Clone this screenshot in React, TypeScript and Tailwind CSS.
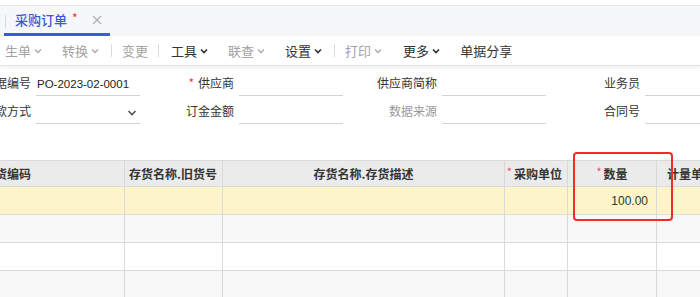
import React from "react"

const font = { fontFamily: '"Noto Sans CJK SC", "Noto Sans", sans-serif' }

function Chevron({ dark }: { dark?: boolean }) {
  return (
    <svg width="8" height="8" viewBox="0 0 8 8" className="ml-[3px]">
      <path
        d="M1 2.5 L4 5.5 L7 2.5"
        fill="none"
        stroke={dark ? "#333" : "#a8a8a8"}
        strokeWidth={dark ? 1.7 : 1.3}
      />
    </svg>
  )
}

function ToolItem({ label, dark, arrow = true, className = "" }: { label: string; dark?: boolean; arrow?: boolean; className?: string }) {
  return (
    <div className={`flex items-center ${className}`}>
      <span className={dark ? "text-[#333]" : "text-[#a3a3a3]"}>{label}</span>
      {arrow && <Chevron dark={dark} />}
    </div>
  )
}

function Sep({ className = "" }: { className?: string }) {
  return <div className={`w-px h-[13px] bg-[#dcdcdc] ${className}`} />
}

function Field({
  label,
  value,
  required,
  muted,
  select,
}: {
  label: string
  value?: string
  required?: boolean
  muted?: boolean
  select?: boolean
}) {
  return (
    <div className="flex items-end w-[203px] shrink-0">
      <div className={`w-[94px] text-right text-[12px] leading-[20px] pb-[3px] ${muted ? "text-[#999]" : "text-[#333]"}`}>
        {required && <span className="text-[#f03a3a] mr-[4px]">*</span>}
        {label}
      </div>
      <div className="ml-[5px] w-[104px] h-[22px] border-b border-[#d4d4d4] flex items-center justify-between">
        <span className="text-[11.5px] text-[#222] pl-px" style={{ fontFamily: '"Liberation Sans", Arial, sans-serif' }}>
          {value}
        </span>
        {select && (
          <svg width="10" height="8" viewBox="0 0 10 8" className="mr-[3px]">
            <path d="M1.5 2 L5 5.5 L8.5 2" fill="none" stroke="#555" strokeWidth="1.6" />
          </svg>
        )}
      </div>
    </div>
  )
}

const cols = [
  { w: "w-[155px]", label: "存货编码", align: "justify-start pl-[13px]" },
  { w: "w-[98px]", label: "存货名称.旧货号", align: "justify-end pr-[5px]" },
  { w: "w-[282px]", label: "存货名称.存货描述", align: "justify-center" },
  { w: "w-[63px]", label: "采购单位", req: true, align: "justify-end pr-[5px]" },
  { w: "w-[89px]", label: "数量", req: true, align: "justify-center" },
  { w: "w-[100px]", label: "计量单位", align: "justify-start pl-[10px]" },
]

const rows = ["bg-[#fdf4c9]", "bg-[#f8f8f8]", "bg-white", "bg-[#f8f8f8]"]

export default function App() {
  return (
    <div className="relative w-[700px] h-[297px] overflow-hidden bg-white" style={font}>
      {/* tab strip */}
      <div className="mt-[5px] h-[31px] bg-[#f6f7f9] border-t border-[#e6e6e6] flex items-end">
        <div className="w-px h-[13px] bg-[#d8d8d8] ml-[5px] mb-[8px]" />
        <div className="relative h-[30px] w-[106px] -ml-[2px] flex items-center border-b-[3px] border-[#3f58e3]">
          <span className="ml-[11px] text-[13px] font-medium text-[#3f53dc]">采购订单</span>
          <span className="ml-[5px] text-[12px] text-[#f02c2c] -mt-[3px]">*</span>
          <svg width="10" height="10" viewBox="0 0 10 10" className="ml-[14px]">
            <path d="M1 1 L9 9 M9 1 L1 9" stroke="#b0b0b0" strokeWidth="1.3" />
          </svg>
        </div>
      </div>

      {/* toolbar */}
      <div className="h-[30px] flex items-center text-[13px] bg-white border-b border-[#e4e4e4] shadow-[0_2px_3px_rgba(0,0,0,0.06)]">
        <ToolItem label="生单" className="ml-[5px]" />
        <ToolItem label="转换" className="ml-[20px]" />
        <Sep className="ml-[12px]" />
        <ToolItem label="变更" arrow={false} className="ml-[10px]" />
        <Sep className="ml-[10px]" />
        <ToolItem label="工具" dark className="ml-[12px]" />
        <ToolItem label="联查" className="ml-[20px]" />
        <ToolItem label="设置" dark className="ml-[20px]" />
        <Sep className="ml-[12px]" />
        <ToolItem label="打印" className="ml-[10px]" />
        <ToolItem label="更多" dark className="ml-[21px]" />
        <ToolItem label="单据分享" dark arrow={false} className="ml-[20px]" />
      </div>

      {/* form */}
      <div className="pt-[7px] -ml-[63px] flex flex-col gap-[5px]">
        <div className="flex">
          <Field label="单据编号" value="PO-2023-02-0001" />
          <Field label="供应商" required />
          <Field label="供应商简称" />
          <Field label="业务员" />
        </div>
        <div className="flex">
          <Field label="付款方式" select />
          <Field label="订金金额" />
          <Field label="数据来源" muted />
          <Field label="合同号" />
        </div>
      </div>

      {/* grid */}
      <div className="mt-[36px] -ml-[30px] w-[790px]">
        <div className="flex h-[27px] bg-[#ebebeb] border-y border-[#dadada]">
          {cols.map((c) => (
            <div
              key={c.label}
              className={`${c.w} shrink-0 flex items-center border-r border-[#d8d8d8] text-[12px] font-bold text-[#333] ${c.align}`}
            >
              {c.req && <span className="text-[#f04a5a] font-normal mr-[2px] -mt-[4px] text-[11px]">*</span>}
              {c.label}
            </div>
          ))}
        </div>
        {rows.map((bg, i) => (
          <div key={i} className={`flex h-[28px] border-b border-[#dadada] ${bg}`}>
            {cols.map((c, j) => (
              <div
                key={c.label}
                className={`${c.w} shrink-0 flex items-center justify-end pr-[8px] border-r border-[#dadada] text-[12px] text-[#333]`}
                style={j === 4 && i === 0 ? { fontFamily: '"Liberation Sans", Arial, sans-serif' } : undefined}
              >
                {i === 0 && j === 4 ? "100.00" : ""}
              </div>
            ))}
          </div>
        ))}
      </div>

      {/* highlight box */}
      <div className="absolute left-[573px] top-[152px] w-[100px] h-[69px] border-2 border-[#f52b2b] rounded-[4px]" />
    </div>
  )
}
